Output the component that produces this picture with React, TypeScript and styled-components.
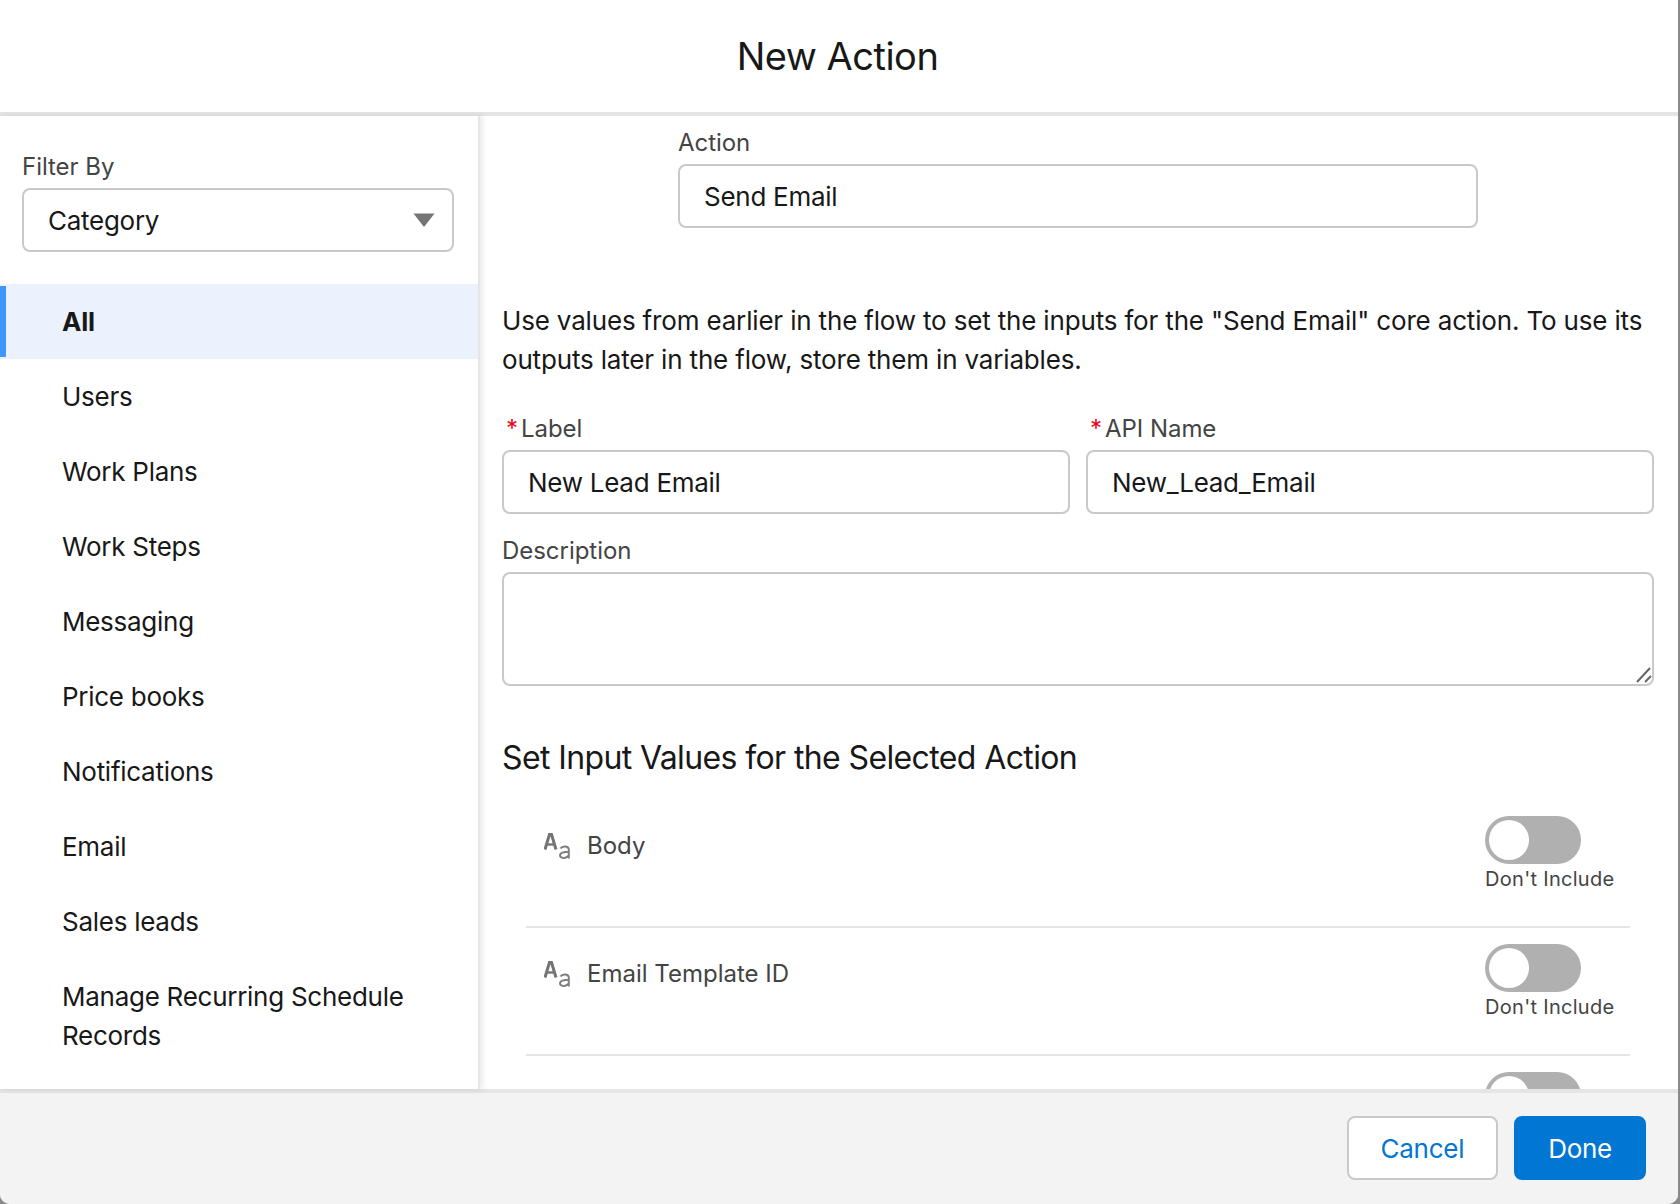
import React from "react";
import styled, { createGlobalStyle } from "styled-components";

const Global = createGlobalStyle`
  html, body { margin: 0; padding: 0; background: #8a8a8a; }
  * { box-sizing: border-box; }
  #root { width: 1680px; height: 1204px; overflow: hidden; }
`;

const Modal = styled.div`
  width: 1678px;
  height: 1204px;
  display: flex;
  flex-direction: column;
  background: #fff;
  border-radius: 0 0 10px 10px;
  overflow: hidden;
  font-family: Inter, "Liberation Sans", sans-serif;
  color: #181818;
  font-size: 26px;
  line-height: 39px;
  letter-spacing: -0.27px;
`;

const Header = styled.header`
  flex: 0 0 116px;
  display: flex;
  align-items: center;
  justify-content: center;
  padding-right: 3px;
  border-bottom: 4px solid #e5e5e5;
`;

const Title = styled.h1`
  margin: 0;
  font-size: 38px;
  font-weight: 400;
  line-height: 48px;
  letter-spacing: -0.5px;
`;

const Body = styled.div`
  flex: 1;
  min-height: 0;
  display: flex;
`;

const Sidebar = styled.aside`
  flex: 0 0 480px;
  border-right: 2px solid #e5e5e5;
  box-shadow: 2px 0 6px rgba(0, 0, 0, 0.1);
  position: relative;
  padding-top: 33px;
  overflow: hidden;
`;

const FilterBlock = styled.div`
  padding: 0 24px 0 22px;
  margin-bottom: 32px;
`;

const FieldLabel = styled.label`
  display: block;
  font-size: 24px;
  line-height: 36px;
  color: #444;
  letter-spacing: -0.04px;
  margin-bottom: 3px;
`;

const Select = styled.div`
  height: 64px;
  border: 2px solid #c9c9c9;
  border-radius: 8px;
  display: flex;
  align-items: center;
  justify-content: space-between;
  padding: 0 17px 0 24px;
  background: #fff;
`;

const NavList = styled.ul`
  list-style: none;
  margin: 0;
  padding: 0;
`;

const NavItem = styled.li<{ $active?: boolean }>`
  position: relative;
  padding: 18px 40px 18px 62px;
  font-weight: ${(p) => (p.$active ? 700 : 400)};
  background: ${(p) => (p.$active ? "#ebf2fe" : "transparent")};
`;

const ActiveBar = styled.span`
  position: absolute;
  left: 0;
  top: 2px;
  bottom: 2px;
  width: 6px;
  background: #4096fa;
`;

const Main = styled.main`
  flex: 1;
  min-width: 0;
  padding: 9px 24px 0 22px;
  overflow: hidden;
`;

const ActionBlock = styled.div`
  width: 800px;
  margin: 0 auto 73px;
`;

const Input = styled.div`
  height: 64px;
  border: 2px solid #c9c9c9;
  border-radius: 8px;
  display: flex;
  align-items: center;
  padding: 0 24px;
  background: #fff;
  white-space: nowrap;
`;

const Paragraph = styled.p`
  margin: 0 0 32px;
  letter-spacing: -0.17px;
`;

const TwoColumns = styled.div`
  display: grid;
  grid-template-columns: 1fr 1fr;
  gap: 16px;
  margin-bottom: 19px;
`;

const Required = styled.abbr`
  color: #ea001e;
  text-decoration: none;
  margin: 0 3px 0 4px;
`;

const TextArea = styled.div`
  position: relative;
  height: 114px;
  border: 2px solid #c9c9c9;
  border-radius: 8px;
  margin-bottom: 48px;
`;

const ResizeGrip = styled.svg`
  position: absolute;
  right: 0;
  bottom: 0;
`;

const Heading = styled.h2`
  margin: 0 0 18px;
  font-size: 32px;
  font-weight: 400;
  line-height: 48px;
  letter-spacing: -0.62px;
`;

const InputRow = styled.div`
  margin: 0 24px 0 24px;
  height: 128px;
  padding: 16px 0 0 18px;
  border-bottom: 2px solid #e5e5e5;
  display: flex;
  justify-content: space-between;
  align-items: flex-start;
`;

const RowName = styled.div`
  display: flex;
  align-items: center;
  gap: 16px;
  color: #444;
  font-size: 24px;
  letter-spacing: 0;
  margin-top: 10px;
`;

const ToggleColumn = styled.div`
  width: 145px;
  margin-left: auto;
`;

const ToggleTrack = styled.div`
  width: 96px;
  height: 48px;
  border-radius: 24px;
  background: #b0b0b0;
  padding: 4px;
`;

const ToggleKnob = styled.div`
  width: 40px;
  height: 40px;
  border-radius: 50%;
  background: #fff;
`;

const ToggleText = styled.div`
  font-size: 20px;
  line-height: 30px;
  color: #444;
  letter-spacing: 0.3px;
  white-space: nowrap;
`;

const Footer = styled.footer`
  flex: 0 0 115px;
  border-top: 4px solid #e5e5e5;
  background: #f3f3f3;
  display: flex;
  justify-content: flex-end;
  align-items: flex-start;
  gap: 16px;
  padding: 23px 32px 0 0;
`;

const Button = styled.button<{ $primary?: boolean }>`
  height: 64px;
  padding: 0 32px;
  border-radius: 8px;
  font: inherit;
  letter-spacing: inherit;
  border: 2px solid ${(p) => (p.$primary ? "#0176d3" : "#c9c9c9")};
  background: ${(p) => (p.$primary ? "#0176d3" : "#fff")};
  color: ${(p) => (p.$primary ? "#fff" : "#0176d3")};
`;

const TextIcon = () => (
  <svg width="27" height="26" viewBox="0 0 27 26">
    <path d="M1 16.5 L5.6 1 H7.4 L12 16.5" fill="none" stroke="#747474" strokeWidth="3" />
    <path d="M3 11.5 H10" stroke="#747474" strokeWidth="2.4" />
    <path
      d="M16.5 15.5 C18 12.8 24.5 12.5 24.8 16.5 V25.5 M24.8 18.8 C20 18.8 16 19.5 16 22.3 C16 25.6 22.5 26 24.8 22.3"
      fill="none"
      stroke="#808080"
      strokeWidth="2"
    />
  </svg>
);

const Caret = () => (
  <svg width="22" height="14" viewBox="0 0 22 14">
    <path d="M0.5 0.5 H21.5 L11 14 Z" fill="#747474" />
  </svg>
);

const Row = ({ name, clipped }: { name?: string; clipped?: boolean }) => (
  <InputRow>
    {name && (
      <RowName>
        <TextIcon />
        {name}
      </RowName>
    )}
    <ToggleColumn>
      <ToggleTrack>
        <ToggleKnob />
      </ToggleTrack>
      {!clipped && <ToggleText>Don't Include</ToggleText>}
    </ToggleColumn>
  </InputRow>
);

const categories = [
  "Users",
  "Work Plans",
  "Work Steps",
  "Messaging",
  "Price books",
  "Notifications",
  "Email",
  "Sales leads",
  "Manage Recurring Schedule Records",
];

export default function App() {
  return (
    <Modal>
      <Global />
      <Header>
        <Title>New Action</Title>
      </Header>
      <Body>
        <Sidebar>
          <FilterBlock>
            <FieldLabel>Filter By</FieldLabel>
            <Select>
              Category
              <Caret />
            </Select>
          </FilterBlock>
          <NavList>
            <NavItem $active>
              <ActiveBar />
              All
            </NavItem>
            {categories.map((c) => (
              <NavItem key={c}>{c}</NavItem>
            ))}
          </NavList>
        </Sidebar>
        <Main>
          <ActionBlock>
            <FieldLabel>Action</FieldLabel>
            <Input>Send Email</Input>
          </ActionBlock>
          <Paragraph>
            Use values from earlier in the flow to set the inputs for the "Send Email" core action. To use its
            outputs later in the flow, store them in variables.
          </Paragraph>
          <TwoColumns>
            <div>
              <FieldLabel>
                <Required>*</Required>Label
              </FieldLabel>
              <Input>New Lead Email</Input>
            </div>
            <div>
              <FieldLabel>
                <Required>*</Required>API Name
              </FieldLabel>
              <Input>New_Lead_Email</Input>
            </div>
          </TwoColumns>
          <FieldLabel>Description</FieldLabel>
          <TextArea>
            <ResizeGrip width="20" height="20" viewBox="0 0 20 20">
              <path d="M5 18 L18 4 M13 18 L19 12" stroke="#666" strokeWidth="2" fill="none" />
            </ResizeGrip>
          </TextArea>
          <Heading>Set Input Values for the Selected Action</Heading>
          <Row name="Body" />
          <Row name="Email Template ID" />
          <Row clipped />
        </Main>
      </Body>
      <Footer>
        <Button>Cancel</Button>
        <Button $primary>Done</Button>
      </Footer>
    </Modal>
  );
}
